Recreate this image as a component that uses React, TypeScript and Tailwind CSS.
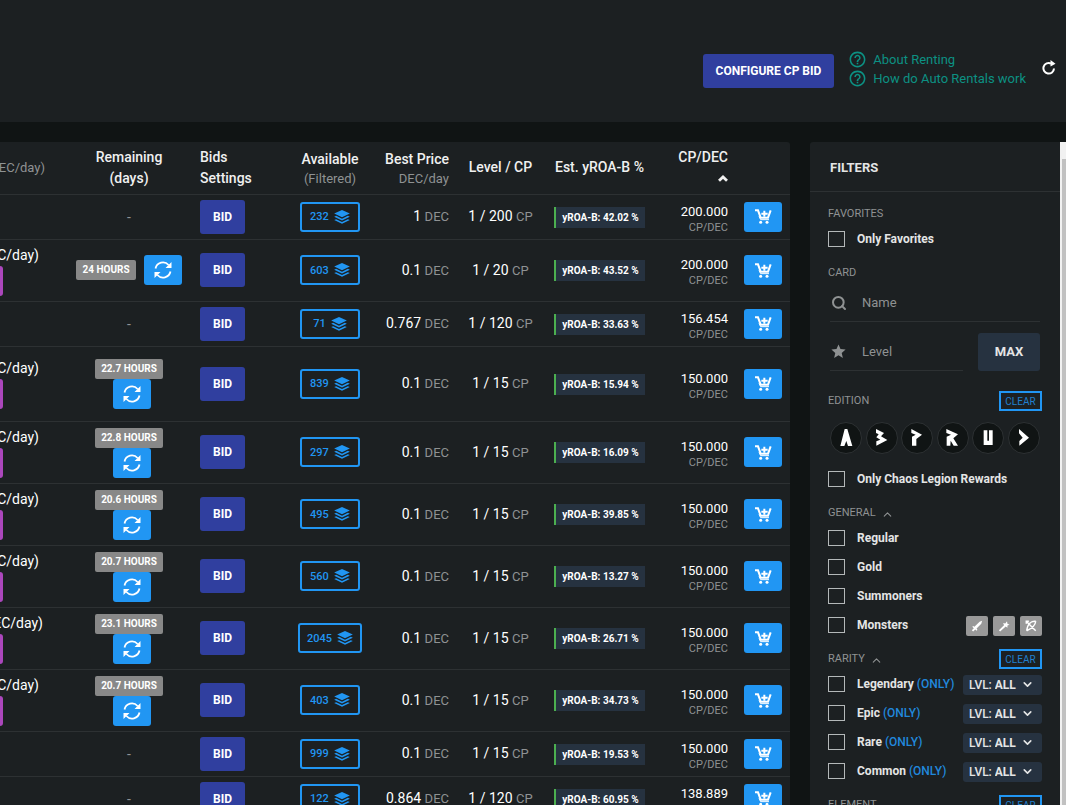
import React, { useState } from 'react';
import { MdHelpOutline, MdStar } from 'react-icons/md';
import { ChevronDown, ChevronUp, Search } from 'lucide-react';

interface Row {
  price?: string;
  remaining?: string;
  inline?: boolean;
  tall?: boolean;
  available: number;
  best: string;
  cp: number;
  roa: string;
  cpDec: string;
}

const rows: Row[] = [
  { available: 232, best: '1', cp: 200, roa: '42.02', cpDec: '200.000' },
  { price: 'C/day)', remaining: '24', inline: true, available: 603, best: '0.1', cp: 20, roa: '43.52', cpDec: '200.000' },
  { available: 71, best: '0.767', cp: 120, roa: '33.63', cpDec: '156.454' },
  { price: 'C/day)', remaining: '22.7', tall: true, available: 839, best: '0.1', cp: 15, roa: '15.94', cpDec: '150.000' },
  { price: 'C/day)', remaining: '22.8', available: 297, best: '0.1', cp: 15, roa: '16.09', cpDec: '150.000' },
  { price: 'C/day)', remaining: '20.6', available: 495, best: '0.1', cp: 15, roa: '39.85', cpDec: '150.000' },
  { price: 'C/day)', remaining: '20.7', available: 560, best: '0.1', cp: 15, roa: '13.27', cpDec: '150.000' },
  { price: 'EC/day)', remaining: '23.1', available: 2045, best: '0.1', cp: 15, roa: '26.71', cpDec: '150.000' },
  { price: 'C/day)', remaining: '20.7', available: 403, best: '0.1', cp: 15, roa: '34.73', cpDec: '150.000' },
  { available: 999, best: '0.1', cp: 15, roa: '19.53', cpDec: '150.000' },
  { available: 122, best: '0.864', cp: 120, roa: '60.95', cpDec: '138.889' },
];

const editions = [
  { name: 'Alpha', d: 'M44 21L52 21L67 72L54 72L49 57L43 72L31 72Z' },
  { name: 'Beta', d: 'M30 21L54 33L45 43L64 54L31 71L31 58L43 53L31 46L38 37L30 33Z' },
  { name: 'Promo', d: 'M31 21L63 38L46 51L46 71L33 71L33 44L44 38L31 33Z' },
  { name: 'Reward', d: 'M28 21L63 37L49 49L63 71L50 71L41 56L40 71L29 71L29 44L42 38L28 33Z' },
  { name: 'Untamed', d: 'M35 25L46 25L46 56L51 56L51 25L62 25L62 69L35 69Z' },
  { name: 'Chaos Legion', d: 'M33 21L63 47L34 71L34 57L44 47L33 34Z' },
];

const RefreshIcon = () => (
  <svg viewBox="0 0 18 18" className="w-[18px] h-[18px]" fill="none" stroke="currentColor" strokeWidth="1.8">
    <path d="M1.5 7.5A7.6 7.6 0 0 1 14.6 4" />
    <path d="M16.5 10.5A7.6 7.6 0 0 1 3.4 14" />
    <path d="M17.5 1v6h-6z M.5 17v-6h6z" fill="currentColor" stroke="none" />
  </svg>
);

const LayersIcon = () => (
  <svg viewBox="0 0 48 43" className="w-4 h-[14px]" fill="currentColor">
    <path d="M24 0L48 11L24 22L0 11Z" />
    <path d="M0 20.500L6 18L24 26.500L42 18L48 20.500L24 32Z" />
    <path d="M0 31L6 28.500L24 37L42 28.500L48 31L24 42.500Z" />
  </svg>
);

const CartIcon = () => (
  <svg viewBox="0 0 51 45" className="w-[17px] h-[15px]" fill="none" stroke="currentColor" strokeWidth="6">
    <path d="M0 4H9L17 26H39L47 4" />
    <path d="M19 14H38M28 5V23" />
    <path d="M12 22L17 32H42" strokeWidth="3" />
    <circle cx="17" cy="40" r="4.5" fill="currentColor" stroke="none" />
    <circle cx="36" cy="40" r="4.5" fill="currentColor" stroke="none" />
  </svg>
);

const ReloadIcon = () => (
  <svg viewBox="0 0 14 15" className="w-[14px] h-[15px]" fill="none" stroke="currentColor" strokeWidth="2">
    <path d="M12 8.500A5.300 5.300 0 1 1 9 3.500" />
    <path d="M8.500 0L13.500 3.700L8.500 6.500Z" fill="currentColor" stroke="none" />
  </svg>
);

const attackIcons = [
  { name: 'Melee', fill: 'M13 1L12 4.500L6.500 10L7.500 11.500L6.500 12.500L5 11L2.500 13.500L1 12L3.300 9.500L1.500 8L2.500 7L4 8L10 2Z' },
  { name: 'Magic', fill: 'M1 12L7 6L6 3.500L8.500 4L10.500 1.500L11 4.500L13.500 5.500L11 6.500L11 9L9 7.500L2.500 13.500Z' },
  { name: 'Ranged', line: 'M12.500 1.500C8 1 3 3.500 2 12.500M12.500 1.500C12 6 8 10 2 12.500M2 2L12.500 12.500M1.500 4.500V1.500H4.500' },
];

const BidButton = ({ children }: { children: React.ReactNode }) => (
  <button className="h-[34px] px-[13px] rounded-[3px] bg-[#303f9f] text-white text-xs font-bold">{children}</button>
);

const ClearButton = () => (
  <button className="self-end h-5 w-[43px] pt-px border-2 border-[#2196f3] text-[#2180d0] text-[10px] leading-4">CLEAR</button>
);

const SectionTitle = ({ title, arrow, clear }: { title: string; arrow?: boolean; clear?: boolean }) => (
  <div className="mt-[9px] h-[21px] flex items-center justify-between">
    <h3 className="pt-[2px] flex items-center gap-[5px] text-[11px] text-[#8f9293]">
      {title}
      {arrow && <ChevronUp size={13} className="mt-px" />}
    </h3>
    {clear && <ClearButton />}
  </div>
);

const CheckRow = ({ label, only, children }: { label: string; only?: boolean; children?: React.ReactNode }) => (
  <div className="h-[29px] flex items-center justify-between">
    <div className="flex items-center text-xs">
      <label className="flex items-center gap-3 font-bold text-[#e4e5e5]">
        <input type="checkbox" className="appearance-none w-[17px] h-4 border border-[#b4b8b9] checked:bg-[#2196f3]" />
        {label}
      </label>
      {only && <button className="ml-[3px] text-[#2188dc] font-medium">(ONLY)</button>}
    </div>
    {children && <div className="pt-[2px] flex gap-[5px]">{children}</div>}
  </div>
);

const LevelSelect = ({ name }: { name: string }) => (
  <label className="relative h-5 w-[79px] px-[6px] flex items-center gap-[3px] rounded-[3px] bg-[#263240] text-[#e4e5e5] text-xs font-medium">
    LVL:
    <select aria-label={`${name} level`} className="appearance-none w-11 font-bold outline-none">
      <option>ALL</option>
      <option>1</option>
      <option>2</option>
    </select>
    <ChevronDown size={13} strokeWidth={3} className="absolute right-2 pointer-events-none" />
  </label>
);

const Remaining = ({ row }: { row: Row }) => {
  if (!row.remaining) return <span className="text-[#8f9293]">-</span>;
  return (
    <div className={row.inline ? 'flex items-center justify-center gap-2' : 'flex flex-col items-center pt-px'}>
      <span className="h-5 px-[6px] leading-5 rounded-[2px] bg-[#888] text-white text-[10px] font-bold whitespace-nowrap">
        {row.remaining} HOURS
      </span>
      <button
        aria-label="Renew"
        className={`w-[38px] h-[30px] flex items-center justify-center rounded-[3px] bg-[#2196f3] text-white ${row.inline ? '' : 'ml-[5px]'}`}
      >
        <RefreshIcon />
      </button>
    </div>
  );
};

const RentalRow = ({ row }: { row: Row }) => (
  <tr className={`border-b border-[#2d3133] ${row.tall ? 'h-[75px]' : row.price ? 'h-[62px]' : 'h-[45px]'}`}>
    <td>
      {row.price && (
        <div>
          <div className={`flex justify-end overflow-hidden leading-[21px] ${row.price === 'EC/day)' ? 'w-[43px]' : 'w-[39px]'}`}>
            <span>{row.price}</span>
          </div>
          <div className="w-[3px] h-[30px] rounded-r-[3px] bg-[#ab47bc]" />
        </div>
      )}
    </td>
    <td className="text-center"><Remaining row={row} /></td>
    <td className="pl-[10px]"><BidButton>BID</BidButton></td>
    <td>
      <div className="flex justify-center">
        <button className="h-[30px] min-w-[60px] px-[7px] flex items-center justify-center gap-[5px] border-2 border-[#2196f3] rounded-[3px] text-[#2196f3] text-[11px] font-medium">
          <span className="pt-px">{row.available}</span>
          <LayersIcon />
        </button>
      </div>
    </td>
    <td className="pr-[10px] text-right">
      {row.best} <span className="text-[13px] text-[#8f9293]">DEC</span>
    </td>
    <td className="text-center whitespace-nowrap">
      1 / {row.cp} <span className="text-[13px] text-[#8f9293]">CP</span>
    </td>
    <td className="pt-px">
      <div className="mx-auto w-[91px] h-[21px] border-l-2 border-[#4caf50] bg-[#263240] text-center text-[10px] leading-[21px] font-bold whitespace-nowrap">
        yROA-B: {row.roa} %
      </div>
    </td>
    <td className="pt-[6px] pr-[10px] text-right">
      <div className="text-[13px] leading-4">{row.cpDec}</div>
      <div className="text-[11px] leading-4 text-[#8f9293]">CP/DEC</div>
    </td>
    <td className="pl-[6px]">
      <button aria-label="Add to cart" className="w-[38px] h-[30px] flex items-center justify-center rounded-[3px] bg-[#2196f3] text-white">
        <CartIcon />
      </button>
    </td>
  </tr>
);

const RentalTable = () => (
  <div className="flex-1 min-w-0 rounded-tr-[3px] bg-[#1c2022]">
    <table className="w-full table-fixed text-sm text-white">
      <colgroup>
        <col />
        <col className="w-[122px]" />
        <col className="w-[102px]" />
        <col className="w-[76px]" />
        <col className="w-[91px]" />
        <col className="w-[83px]" />
        <col className="w-[115px]" />
        <col className="w-[81px]" />
        <col className="w-[52px]" />
      </colgroup>
      <thead>
        <tr className="h-[52px] border-b border-[#2d3133] text-[#f0f0f0] leading-[21px] whitespace-nowrap">
          <th>
            <div className="w-[45px] flex justify-end overflow-hidden text-[13px] font-normal text-[#8f9293]">
              <span>EC/day)</span>
            </div>
          </th>
          <th className="font-medium">Remaining<br />(days)</th>
          <th className="pl-[10px] font-medium text-left">Bids<br />Settings</th>
          <th className="pt-[3px] font-medium leading-[19px]">
            Available
            <div className="text-[13px] font-normal text-[#8f9293]">(Filtered)</div>
          </th>
          <th className="pt-[3px] pr-[10px] font-medium text-right leading-[19px]">
            Best Price
            <div className="text-[13px] font-normal text-[#8f9293]">DEC/day</div>
          </th>
          <th className="font-medium">Level / CP</th>
          <th className="font-medium">Est. yROA-B %</th>
          <th className="pr-[10px] font-medium text-right">
            CP/DEC
            <div className="h-[21px] flex items-center justify-end">
              <svg viewBox="0 0 10 7" className="w-[10px] h-[7px]" fill="none" stroke="currentColor" strokeWidth="2.8">
                <path d="M1 5.800L5 2L9 5.800" />
              </svg>
            </div>
          </th>
          <th aria-label="Rent" />
        </tr>
      </thead>
      <tbody>
        {rows.map((row) => <RentalRow key={row.available} row={row} />)}
      </tbody>
    </table>
  </div>
);

const Filters = () => {
  const [name, setName] = useState('');
  const [level, setLevel] = useState('');

  return (
    <aside className="w-[250px] shrink-0 rounded-tl-[3px] bg-[#1c2022] overflow-hidden">
      <h2 className="h-[50px] pl-5 pt-[2px] flex items-center border-b border-[#2d3133] text-[13px] font-bold text-[#e4e5e5]">FILTERS</h2>
      <div className="px-[18px] pt-[2px]">
        <SectionTitle title="FAVORITES" />
        <CheckRow label="Only Favorites" />

        <SectionTitle title="CARD" />
        <div className="mx-[2px] text-[13px] text-[#8f9293]">
          <label className="h-[39px] pt-[2px] pl-px flex items-center gap-[15px] border-b border-[#2d3133]">
            <Search size={16} strokeWidth={3} className="shrink-0" />
            <input
              aria-label="Name"
              placeholder="Name"
              value={name}
              onChange={(e) => setName(e.target.value)}
              className="w-full outline-none placeholder:text-[#8f9293]"
            />
          </label>
          <div className="mt-[11px] h-[38px] flex gap-[15px]">
            <label className="flex-1 min-w-0 flex items-center gap-[15px] border-b border-[#2d3133]">
              <MdStar size={17} className="shrink-0" />
              <input
                aria-label="Level"
                placeholder="Level"
                value={level}
                onChange={(e) => setLevel(e.target.value)}
                className="w-full outline-none placeholder:text-[#8f9293]"
              />
            </label>
            <button onClick={() => setLevel('MAX')} className="w-[62px] rounded-[3px] bg-[#263240] font-bold text-[#e4e5e5]">MAX</button>
          </div>
        </div>

        <div className="pt-[10px]">
          <SectionTitle title="EDITION" clear />
        </div>
        <div className="mx-[2px] mt-[11px] mb-[10px] flex justify-between">
          {editions.map((edition) => (
            <button key={edition.name} aria-label={edition.name} className="w-8 h-8 rounded-full border border-[#2d3133] bg-[#101414]">
              <svg viewBox="3 3 90 90" className="w-full h-full" fill="#fff">
                <path d={edition.d} />
              </svg>
            </button>
          ))}
        </div>
        <CheckRow label="Only Chaos Legion Rewards" />

        <SectionTitle title="GENERAL" arrow />
        <CheckRow label="Regular" />
        <CheckRow label="Gold" />
        <CheckRow label="Summoners" />
        <CheckRow label="Monsters">
          {attackIcons.map((icon) => (
            <button key={icon.name} aria-label={icon.name} className="w-[22px] h-5 flex items-center justify-center rounded-[2px] bg-[#999] text-white">
              <svg viewBox="0 0 14 14" className="w-3 h-3" fill="none">
                {icon.fill && <path d={icon.fill} fill="currentColor" />}
                {icon.line && <path d={icon.line} stroke="currentColor" strokeWidth="1.7" />}
              </svg>
            </button>
          ))}
        </CheckRow>

        <SectionTitle title="RARITY" arrow clear />
        {['Legendary', 'Epic', 'Rare', 'Common'].map((rarity) => (
          <CheckRow key={rarity} label={rarity} only>
            <LevelSelect name={rarity} />
          </CheckRow>
        ))}

        <SectionTitle title="ELEMENT" clear />
      </div>
    </aside>
  );
};

export default function App() {
  return (
    <div className="h-screen flex flex-col overflow-hidden bg-[#101414] font-['Roboto',sans-serif]">
      <header className="shrink-0 pt-[50px] pb-[34px] pr-[10px] flex items-end justify-end bg-[#1c2022]">
        <BidButton>CONFIGURE CP BID</BidButton>
        <nav className="ml-[14px] text-[13px] leading-[19px] text-[#0c9183]">
          <a href="#about" className="flex items-center gap-[6px]"><MdHelpOutline size={19} />About Renting</a>
          <a href="#auto" className="flex items-center gap-[6px]"><MdHelpOutline size={19} />How do Auto Rentals work</a>
        </nav>
        <button aria-label="Reload" className="ml-4 pb-1 self-center text-white"><ReloadIcon /></button>
      </header>

      <main className="mt-5 flex-1 min-h-0 flex">
        <RentalTable />
        <div className="w-5 shrink-0" />
        <Filters />
        <div className="w-[6px] shrink-0 pt-[17px] pl-[2px] bg-[#f1f1f1]">
          <div className="h-full bg-[#c1c1c1]" />
        </div>
      </main>
    </div>
  );
}
